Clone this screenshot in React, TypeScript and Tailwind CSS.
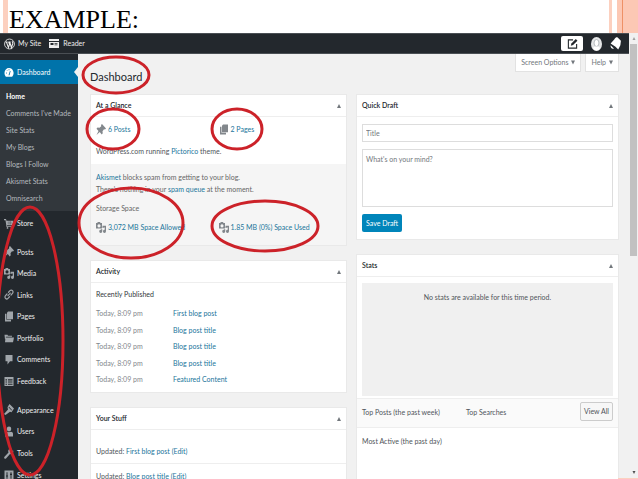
import React from 'react';

type IconName =
  | 'gauge' | 'cart' | 'pin' | 'media' | 'link' | 'pages' | 'folder'
  | 'comment' | 'form' | 'brush' | 'user' | 'wrench' | 'sliders';

// 20x20 admin glyphs
const glyphs: Record<IconName, React.ReactNode> = {
  gauge: (
    <>
      <path d="M10 2a9 9 0 0 0-9 9c0 2.600 1 5 2.700 6.500h12.600A9 9 0 0 0 10 2z" />
      <path d="M9 15l3-8 1 1-2 7z" fill="#0073aa" />
      <path d="M4 11h2M6 6l1 1M10 4v2" stroke="#0073aa" strokeWidth="1.500" />
    </>
  ),
  cart: (
    <>
      <path d="M0 2h4l1 3h14l-2 8H6l.5 2H17v1.500H5L3 4H0z" />
      <circle cx="7" cy="18" r="1.700" />
      <circle cx="15" cy="18" r="1.700" />
      <path d="M7 9h9M10 5v7M13 5v7" stroke="#23282d" strokeWidth=".5" />
    </>
  ),
  pin: <path d="M12 0l8 8-2 2-2-.5-3 3.500.5 4-2 2-4-4.500L1 20l4-7.500L1 8.500l2-2 4 .5L10.500 4 10 2z" />,
  media: (
    <>
      <path fillRule="evenodd" d="M0 2h2.500l1-2h4.500l1 2H12v10H0zM6 4a3 3 0 1 0 .01 0z" />
      <path d="M13 7h7v10a3 3 0 1 1-2.500-3V10H15v1h-2zM10 13h2.500v4a3 3 0 1 1-2.500-3z" />
    </>
  ),
  link: (
    <path
      d="M8 12l4.500-4.500M9 6l3-3a3.500 3.500 0 0 1 5 5l-3 3M11 14l-3 3a3.500 3.500 0 0 1-5-5l3-3"
      fill="none" stroke="currentColor" strokeWidth="2.400" strokeLinecap="round"
    />
  ),
  pages: <path d="M8 1h10v14H6V3zM2 5h3v11h9v3H2z" />,
  folder: <path d="M1 3h6l1 2h8v2H4L2 12zM3 8h17l-2 9H2z" />,
  comment: <path d="M3 2h14v11h-5l-5 6v-6H3z" />,
  form: <path fillRule="evenodd" d="M1 2h18v16H1zM3 6v2h3V6zm5 0v2h9V6zM3 10v2h3v-2zm5 0v2h9v-2zM3 14v2h3v-2zm5 0v2h9v-2z" />,
  brush: <path d="M11 0l9 8-5 7-3-1-9 6-3-2 8-8-1-4zM9 6l6 6 1-1-6-6z" fillRule="evenodd" />,
  user: (
    <>
      <circle cx="10" cy="5.500" r="4.500" />
      <path d="M2 19v-5c0-2 2-3.500 4-3.500l4 1 4-1c2 0 4 1.500 4 3.500v5z" />
    </>
  ),
  wrench: <path d="M18 4l-3 3-2.500-.5L12 4l3-3a5 5 0 0 0-6 7L1 16a2.100 2.100 0 0 0 3 3l8-8a5 5 0 0 0 6-7z" />,
  sliders: <path fillRule="evenodd" d="M1 1h18v18H1zM5 4v6H4v2h1v4h2v-4h1v-2H7V4zm8 0v3h-1v2h1v7h2V9h1V7h-1V4z" />,
};

function Icon({ name }: { name: IconName }) {
  return (
    <svg viewBox="0 0 20 20" className="h-[11px] w-[10px] shrink-0" fill="currentColor" preserveAspectRatio="none">
      {glyphs[name]}
    </svg>
  );
}

const submenu = ['Home', "Comments I've Made", 'Site Stats', 'My Blogs', 'Blogs I Follow', 'Akismet Stats', 'Omnisearch'];

const contentMenu: { label: string; icon: IconName }[] = [
  { label: 'Posts', icon: 'pin' },
  { label: 'Media', icon: 'media' },
  { label: 'Links', icon: 'link' },
  { label: 'Pages', icon: 'pages' },
  { label: 'Portfolio', icon: 'folder' },
  { label: 'Comments', icon: 'comment' },
  { label: 'Feedback', icon: 'form' },
];

const adminMenu: { label: string; icon: IconName }[] = [
  { label: 'Appearance', icon: 'brush' },
  { label: 'Users', icon: 'user' },
  { label: 'Tools', icon: 'wrench' },
  { label: 'Settings', icon: 'sliders' },
];

const activity = ['First blog post', 'Blog post title', 'Blog post title', 'Blog post title', 'Featured Content'];

function MenuItem({ label, icon }: { label: string; icon: IconName }) {
  return (
    <a href="#" className="flex items-center gap-[3px] pl-1 text-[#eeeeee]">
      <span className="flex text-[#a0a5aa]"><Icon name={icon} /></span>
      {label}
    </a>
  );
}

function Sidebar() {
  return (
    <nav className="w-[78px] shrink-0 overflow-hidden bg-[#23282d] pt-[6px]">
      <a href="#" className="relative flex h-6 items-center gap-[3px] bg-[#0073aa] pl-1 text-white">
        <Icon name="gauge" />
        Dashboard
        <span className="absolute right-0 h-0 w-0 border-y-[5px] border-r-4 border-y-transparent border-r-[#f1f1f1]" />
      </a>
      <ul className="bg-[#32373c] py-1">
        {submenu.map((item, i) => (
          <li key={item} className="h-[17px] pl-[6px] leading-[17px]">
            <a href="#" className={i === 0 ? 'font-bold text-white' : 'text-[#b4b9be]'}>{item}</a>
          </li>
        ))}
      </ul>
      <div className="grid h-6">
        <MenuItem label="Store" icon="cart" />
      </div>
      <div className="mt-[6px] grid h-[151px] auto-rows-fr">
        {contentMenu.map((item) => <MenuItem key={item.label} {...item} />)}
      </div>
      <div className="mt-[7px] grid h-[87px] auto-rows-fr">
        {adminMenu.map((item) => <MenuItem key={item.label} {...item} />)}
      </div>
    </nav>
  );
}

function AdminBar() {
  return (
    <header className="flex h-[21px] shrink-0 items-center border-y border-[#4a4f54] bg-[#23282d] pl-1 pr-2 text-[#eeeeee]">
      <a href="#" className="flex items-center gap-[3px]">
        <svg viewBox="0 0 20 20" className="h-3 w-[11px]" fill="none" stroke="currentColor">
          <circle cx="10" cy="10" r="9" strokeWidth="1.500" />
          <path d="M3 6.500h3.500M4.500 6.500l3.500 10 2-6-1.500-4M8 6.500h4M10.500 6.500l3 10L16 9c.5-2-1-2.500-1-4" strokeWidth="2" />
        </svg>
        My Site
      </a>
      <a href="#" className="ml-2 flex items-center gap-1">
        <svg viewBox="0 0 20 20" className="h-[11px] w-[10px]" fill="currentColor">
          <path fillRule="evenodd" d="M0 1h20v4H0zM0 7h20v12H0zM3 9v4h6V9zm8 0v1.500h6V9zm0 3v1.500h6V12z" />
        </svg>
        Reader
      </a>
      <button aria-label="New post" className="ml-auto flex h-[15px] w-[22px] items-center justify-center rounded-xs bg-white text-[#23282d]">
        <svg viewBox="0 0 20 20" className="h-3 w-[11px]" fill="none" stroke="currentColor">
          <path d="M11 2.500H2.500v15h15V10" strokeWidth="2" />
          <path d="M7 13l1-4 8-8 3 3-8 8z" fill="currentColor" stroke="none" />
        </svg>
      </button>
      <button aria-label="Account" className="ml-2">
        <svg viewBox="0 0 22 28" className="h-[14px] w-[11px]">
          <ellipse cx="11" cy="14" rx="11" ry="14" fill="#e4e6e7" />
          <ellipse cx="11" cy="12" rx="5" ry="7" fill="#ffffff" stroke="#b5babd" strokeWidth="2" />
          <path d="M4 23c1-4 4-4 7-4s6 0 7 4c-3 5-11 5-14 0z" fill="#ffffff" />
        </svg>
      </button>
      <button aria-label="Notifications" className="ml-2">
        <svg viewBox="0 0 20 24" className="h-[13px] w-[11px]" fill="#ffffff">
          <path d="M14 1l6 6-1 8-4 8-5-5-9-6 7-8c2-3 4-4 6-3zM1 15l6 6c-3 2-7-2-6-6z" />
        </svg>
      </button>
    </header>
  );
}

function Card({ title, children }: { title: string; children: React.ReactNode }) {
  return (
    <section className="border border-[#e9e9e9] bg-white">
      <div className="flex h-[22px] items-center justify-between border-b border-[#eeeeee] px-[5px]">
        <h2 className="font-semibold text-[#23282d]">{title}</h2>
        <button aria-label={`Toggle ${title}`} className="text-[#72777c]">
          <svg viewBox="0 0 6 6" className="h-1 w-1" fill="currentColor"><path d="M0 6l3-6 3 6z" /></svg>
        </button>
      </div>
      {children}
    </section>
  );
}

function Fact({ icon, children }: { icon: IconName; children: React.ReactNode }) {
  return (
    <a href="#" className="flex flex-1 items-center gap-[2px] text-[#21759b]">
      <span className="flex text-[#82878c]"><Icon name={icon} /></span>
      {children}
    </a>
  );
}

function ScreenTab({ children }: { children: React.ReactNode }) {
  return (
    <button className="flex h-[18px] items-center gap-[3px] border border-t-0 border-[#e2e2e2] bg-white px-[5px] text-[#72777c]">
      {children}
      <svg viewBox="0 0 6 6" className="h-[5px] w-1" fill="currentColor"><path d="M0 0h6L3 6z" /></svg>
    </button>
  );
}

function Dashboard() {
  return (
    <main className="min-w-0 flex-1 bg-[#f1f1f1] pl-3 pr-[10px]">
      <div className="flex h-[18px] justify-end gap-1">
        <ScreenTab>Screen Options</ScreenTab>
        <ScreenTab>Help</ScreenTab>
      </div>
      <h1 className="h-[22px] text-[11px] leading-[10px] text-[#23282d]">Dashboard</h1>
      <div className="grid grid-cols-[257fr_263fr] items-start gap-[9px]">
        <div className="flex min-w-0 flex-col gap-[14px]">
          <Card title="At a Glance">
            <div className="px-[5px]">
              <div className="flex h-[25px] items-center">
                <Fact icon="pin">6 Posts</Fact>
                <Fact icon="pages">2 Pages</Fact>
              </div>
              <p className="h-[22px] leading-[18px]">WordPress.com running <a href="#" className="text-[#21759b]">Pictorico</a> theme.</p>
            </div>
            <div className="bg-[#f5f5f5] px-[5px] pt-[7px] text-[#666666]">
              <p className="leading-3"><a href="#" className="text-[#21759b]">Akismet</a> blocks spam from getting to your blog.</p>
              <p className="leading-3">There's nothing in your <a href="#" className="text-[#21759b]">spam queue</a> at the moment.</p>
              <h3 className="mt-[7px] leading-3">Storage Space</h3>
              <div className="flex h-[31px] items-center pb-[5px]">
                <Fact icon="media">3,072 MB Space Allowed</Fact>
                <Fact icon="media">1.85 MB (0%) Space Used</Fact>
              </div>
            </div>
          </Card>
          <Card title="Activity">
            <div className="px-[5px] pb-1">
              <h3 className="h-[22px] leading-[22px] text-[#32373c]">Recently Published</h3>
              <table className="h-[83px] w-full">
                <tbody>
                  {activity.map((title, i) => (
                    <tr key={i}>
                      <td className="w-[77px] p-0 text-[#82878c]">Today, 8:09 pm</td>
                      <td className="p-0"><a href="#" className="text-[#21759b]">{title}</a></td>
                    </tr>
                  ))}
                </tbody>
              </table>
            </div>
          </Card>
          <Card title="Your Stuff">
            <p className="border-b border-[#eeeeee] px-[5px] pb-1 pt-[13px] leading-4">Updated: <a href="#" className="text-[#21759b]">First blog post (Edit)</a></p>
            <p className="px-[5px] pt-1 leading-4">Updated: <a href="#" className="text-[#21759b]">Blog post title (Edit)</a></p>
          </Card>
        </div>
        <div className="flex min-w-0 flex-col gap-[14px]">
          <Card title="Quick Draft">
            <form className="flex flex-col items-start px-[5px] pb-[7px] pt-[7px]">
              <input aria-label="Title" placeholder="Title" className="h-[18px] w-full border border-[#dddddd] px-[3px] placeholder:text-[#72777c]" />
              <textarea aria-label="What's on your mind?" placeholder="What's on your mind?" className="mt-[7px] h-[58px] w-full resize-none border border-[#dddddd] px-[3px] py-1 placeholder:text-[#72777c]" />
              <button type="button" className="mt-[7px] h-[18px] rounded-xs bg-[#0085ba] px-1 text-white">Save Draft</button>
            </form>
          </Card>
          <Card title="Stats">
            <div className="mx-[5px] mt-[6px] h-[113px] bg-[#f0f0f0] pt-2 text-center leading-3">No stats are available for this time period.</div>
            <div className="mt-[2px] flex h-[30px] border-y border-[#eeeeee] bg-[#fafafa] px-[5px] pt-[3px]">
              <h3 className="w-[104px] leading-5">Top Posts (the past week)</h3>
              <h3 className="leading-5">Top Searches</h3>
              <button className="ml-auto h-[19px] rounded-xs border border-[#cccccc] bg-[#f7f7f7] px-[3px]">View All</button>
            </div>
            <h3 className="h-14 px-[5px] pt-[7px] leading-3">Most Active (the past day)</h3>
          </Card>
        </div>
      </div>
    </main>
  );
}

function Scrollbar() {
  return (
    <div aria-hidden="true" className="flex w-[9px] shrink-0 flex-col items-center bg-[#f1f1f1] text-[#505050]">
      <svg viewBox="0 0 6 6" className="my-1 h-[3px] w-1" fill="#a0a0a0"><path d="M0 6l3-6 3 6z" /></svg>
      <div className="h-[212px] w-[7px] bg-[#c1c1c1]" />
      <svg viewBox="0 0 6 6" className="mb-[5px] mt-auto h-[3px] w-1" fill="currentColor"><path d="M0 0h6L3 6z" /></svg>
    </div>
  );
}

// hand-drawn highlight rings over the dashboard
function Highlights() {
  return (
    <svg className="pointer-events-none absolute left-0 top-0 h-full w-full" fill="none" stroke="#cc2229" strokeWidth="3">
      <ellipse cx="116" cy="75" rx="33" ry="18" />
      <ellipse cx="113" cy="129" rx="26" ry="20" />
      <ellipse cx="237" cy="129" rx="25" ry="20" />
      <ellipse cx="131" cy="223" rx="52" ry="35" />
      <ellipse cx="265" cy="226" rx="53" ry="25" />
      <ellipse cx="30" cy="341" rx="33" ry="134" />
    </svg>
  );
}

export default function App() {
  return (
    <div className="relative flex h-screen flex-col overflow-hidden bg-white font-[Lato,sans-serif] text-[7px] text-[#50555a]">
      <div className="flex h-[33px] shrink-0 justify-between">
        <div className="flex">
          <div className="ml-[3px] w-[5px] bg-[#fcd0bf]" />
          <h2 className="pl-px pt-1 font-['Liberation_Serif',serif] text-[26px] leading-8 text-black">EXAMPLE:</h2>
        </div>
        <div className="flex">
          <div className="mr-[5px] w-[3px] bg-[#fcd0bf]" />
          <div className="w-[21px] border-l-[5px] border-[#fcc8b4] bg-[#fcc8b4]">
            <div className="h-full w-px bg-[#ee9166]" />
          </div>
        </div>
      </div>
      <div className="flex min-h-0 flex-1">
        <div className="flex min-w-0 flex-1 flex-col">
          <AdminBar />
          <div className="flex min-h-0 flex-1">
            <Sidebar />
            <Dashboard />
          </div>
        </div>
        <Scrollbar />
      </div>
      <div className="absolute bottom-0 right-0 h-px w-5 bg-[#fcd0bf]" />
      <Highlights />
    </div>
  );
}
